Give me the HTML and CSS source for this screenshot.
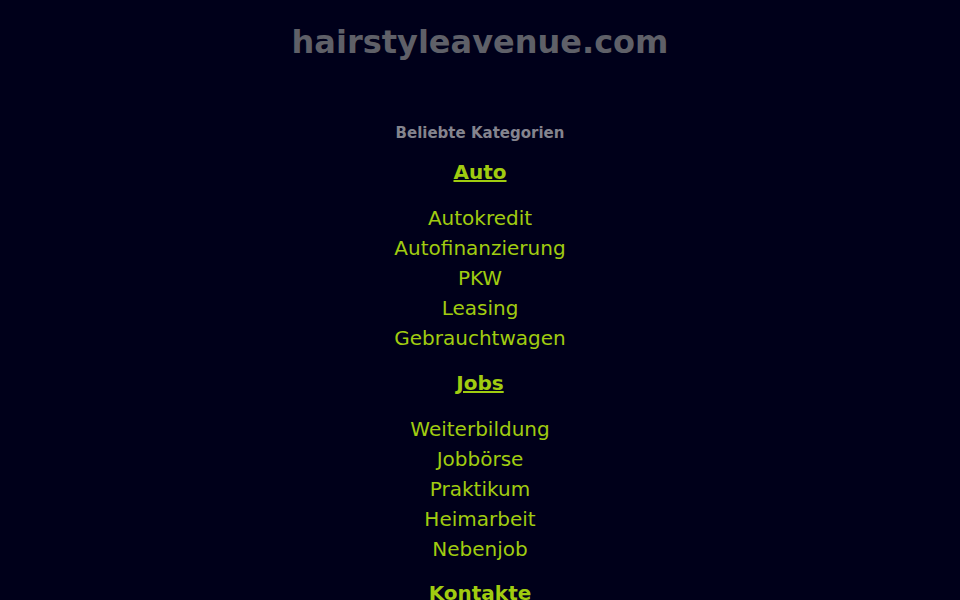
FILE: index.html
```html
<!DOCTYPE html>
<html lang="de">
<head>
<meta charset="utf-8">
<title>hairstyleavenue.com</title>
<link rel="stylesheet" href="styles.css">
</head>
<body>
<header class="header">
  <h1 class="domain">hairstyleavenue.com</h1>
</header>
<main class="content">
  <h2 class="intro">Beliebte Kategorien</h2>
  <section class="cat">
    <h3 class="cat-title"><a href="#">Auto</a></h3>
    <ul class="links">
      <li><a href="#">Autokredit</a></li>
      <li><a href="#">Autofinanzierung</a></li>
      <li><a href="#">PKW</a></li>
      <li><a href="#">Leasing</a></li>
      <li><a href="#">Gebrauchtwagen</a></li>
    </ul>
  </section>
  <section class="cat">
    <h3 class="cat-title"><a href="#">Jobs</a></h3>
    <ul class="links">
      <li><a href="#">Weiterbildung</a></li>
      <li><a href="#">Jobbörse</a></li>
      <li><a href="#">Praktikum</a></li>
      <li><a href="#">Heimarbeit</a></li>
      <li><a href="#">Nebenjob</a></li>
    </ul>
  </section>
  <section class="cat">
    <h3 class="cat-title"><a href="#">Kontakte</a></h3>
    <ul class="links">
      <li><a href="#">Partnersuche</a></li>
      <li><a href="#">Singles</a></li>
    </ul>
  </section>
</main>
</body>
</html>
```
FILE: styles.css
```css
html, body {
  margin: 0;
  padding: 0;
}
body {
  background: #00001a;
  font-family: "DejaVu Sans", sans-serif;
  color: #a0cc10;
  text-align: center;
  min-height: 600px;
}
.header {
  padding-top: 22px;
}
.domain {
  margin: 0;
  font-size: 32px;
  line-height: 40px;
  font-weight: bold;
  color: #5f6068;
}
.content {
  padding-top: 61px;
}
.intro {
  margin: 0;
  font-size: 15px;
  line-height: 20px;
  font-weight: bold;
  color: #84848e;
}
.cat-title {
  margin: 20px 0 0;
  font-size: 20px;
  line-height: 20px;
  font-weight: bold;
}
.cat:first-of-type .cat-title {
  margin-top: 19px;
}
.cat-title a {
  color: #a0cc10;
  text-decoration: underline;
}
.links {
  list-style: none;
  margin: 21px 0 0;
  padding: 0;
}
.links li {
  font-size: 20px;
  line-height: 30px;
}
.links a {
  color: #a0cc10;
  text-decoration: none;
}
.cat:last-of-type .cat-title {
  margin-top: 19px;
}
```
